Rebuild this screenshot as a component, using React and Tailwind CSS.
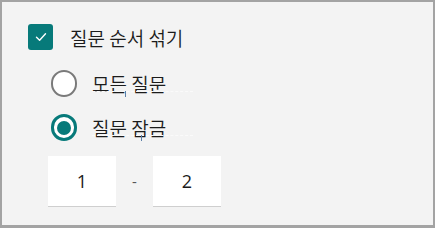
import React from 'react';

const font = { fontFamily: '"Noto Sans CJK KR", "Noto Sans", sans-serif' };

const Check = () => (
    <div className="w-[25px] h-[26px] rounded-[3px] bg-[#077a7a] flex items-center justify-center">
        <svg width="12" height="10" viewBox="0 0 12 10" fill="none">
            <path d="M1.5 5.2 L4.6 8.2 L10.5 1.8" stroke="white" strokeWidth="1.4" strokeLinecap="round" strokeLinejoin="round" />
        </svg>
    </div>
);

const Radio = ({ checked }) => (
    checked ? (
        <div className="w-[26px] h-[27px] rounded-full border-[3px] border-[#077a7a] bg-white flex items-center justify-center">
            <div className="w-[14px] h-[14px] rounded-full bg-[#077a7a]"></div>
        </div>
    ) : (
        <div className="w-[26px] h-[27px] rounded-full border-2 border-[#7a7a7a] bg-white"></div>
    )
);

const RadioRow = ({ label, checked, tick }) => (
    <div className="flex items-center gap-[15px]">
        <Radio checked={checked} />
        <span className="relative text-[19px] leading-none font-[350] text-[#1b1b1b]">
            {label}
            {/* faint dashed underline artifact */}
            <span className="absolute left-0 top-[17px] w-[101px] border-b border-dashed border-[#fafafa]"></span>
            <span className={`absolute top-[17px] w-px h-[6px] bg-[#5b7fa8] ${tick}`}></span>
        </span>
    </div>
);

export default function App() {
    return (
        <div className="w-[435px] h-[228px] bg-[#f3f3f3] border-2 border-b-[3px] border-[#a3a3a3] pl-[26px] pt-[22px]" style={font}>
            {/* Shuffle questions */}
            <div className="flex items-center gap-[17px]">
                <Check />
                <span className="text-[19px] leading-none font-[350] text-[#1b1b1b]">질문 순서 섞기</span>
            </div>

            <div className="pl-[23px] mt-[20px] flex flex-col gap-[17px]">
                <RadioRow label="모든 질문" tick="left-[33px]" />
                <RadioRow label="질문 잠금" checked tick="left-[49px]" />
            </div>

            {/* Range */}
            <div className="flex items-center pl-[20px] mt-[15px]" style={{ fontFamily: '"Open Sans", "Noto Sans", sans-serif' }}>
                <div className="w-[68px] h-[51px] bg-white border-b border-[#cfcfcf] flex items-center justify-center text-[18px] text-[#1b1b1b]">1</div>
                <div className="w-[37px] text-center text-[15px] text-[#555]">-</div>
                <div className="w-[68px] h-[51px] bg-white border-b border-[#cfcfcf] flex items-center justify-center text-[18px] text-[#1b1b1b]">2</div>
            </div>
        </div>
    );
}
